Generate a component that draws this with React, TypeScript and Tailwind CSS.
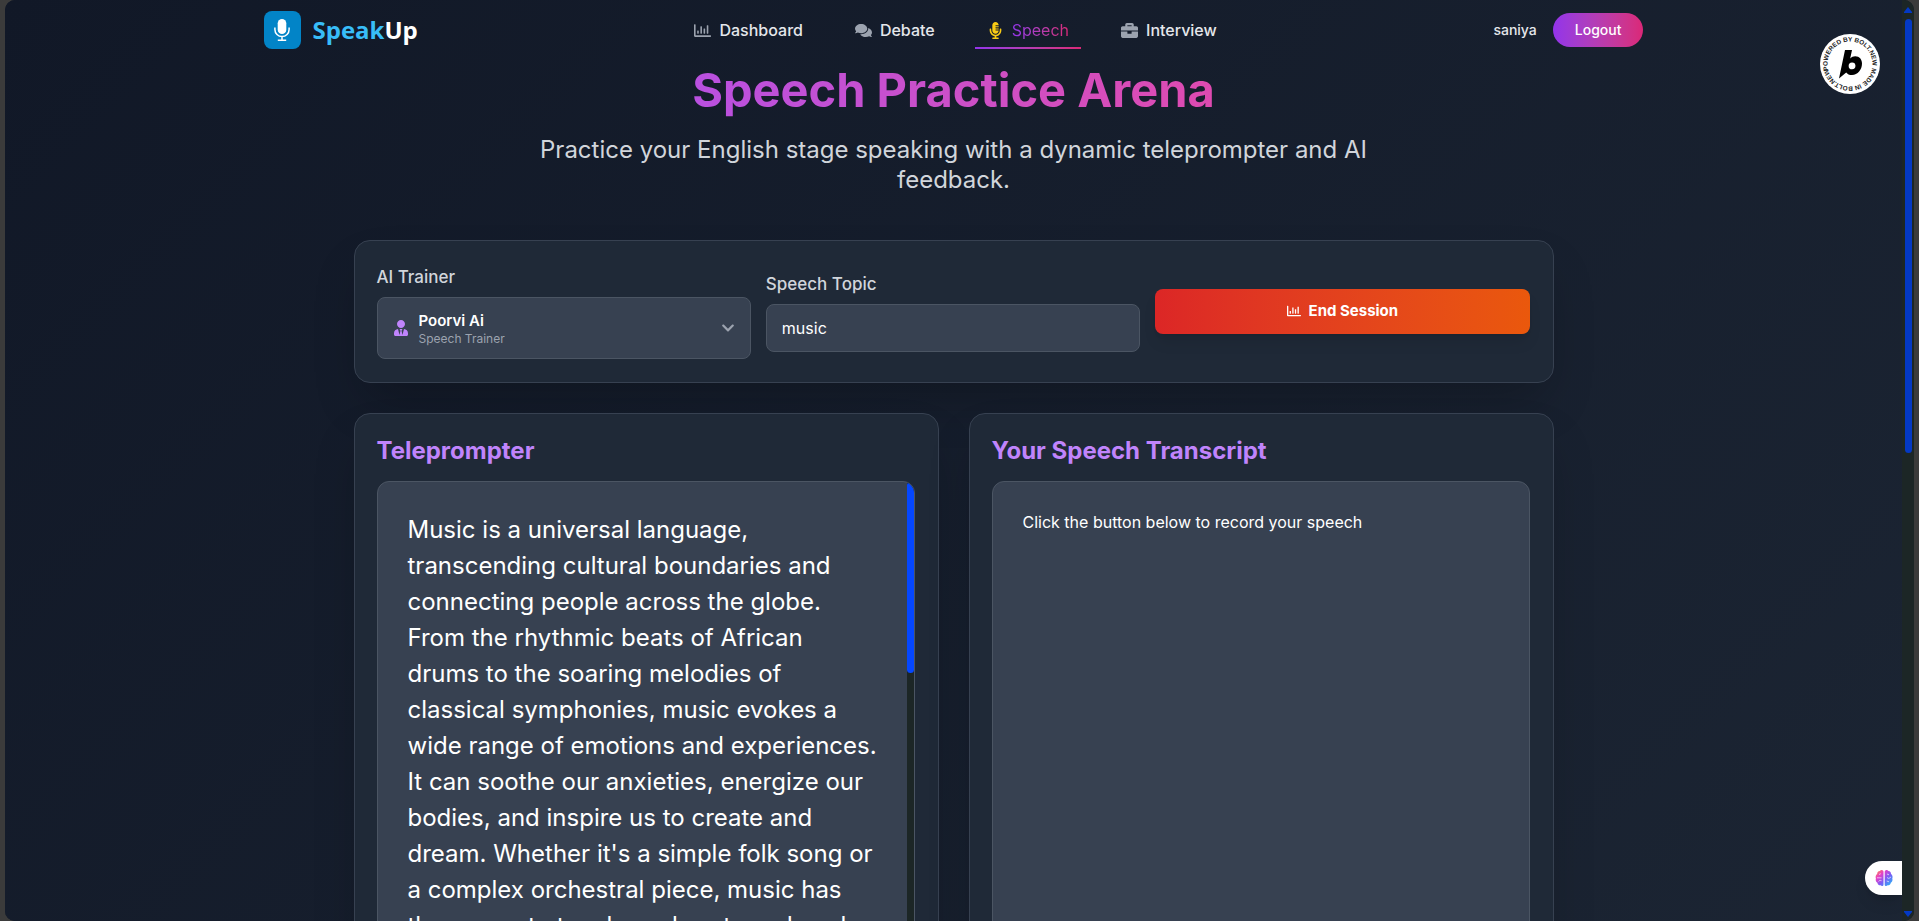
import { FaRegChartBar, FaComments, FaMicrophoneAlt, FaBriefcase, FaUserTie, FaChevronDown } from "react-icons/fa";

const navItems = [
  { name: "Dashboard", icon: FaRegChartBar },
  { name: "Debate", icon: FaComments },
  { name: "Speech", icon: FaMicrophoneAlt, active: true },
  { name: "Interview", icon: FaBriefcase },
];

// one entry per teleprompter line
const speechLines = [
  "Music is a universal language,",
  "transcending cultural boundaries and",
  "connecting people across the globe.",
  "From the rhythmic beats of African",
  "drums to the soaring melodies of",
  "classical symphonies, music evokes a",
  "wide range of emotions and experiences.",
  "It can soothe our anxieties, energize our",
  "bodies, and inspire us to create and",
  "dream. Whether it's a simple folk song or",
  "a complex orchestral piece, music has",
  "the power to touch our hearts and souls.",
];

function Logo() {
  return (
    <a href="#" className="flex items-center gap-3">
      <span className="flex h-[38px] w-[37px] items-center justify-center rounded-lg bg-[#0284c7]">
        <svg viewBox="0 0 16 22" className="h-[22px] w-4" fill="none" stroke="#fff" strokeWidth="1.5">
          <rect x="3.7" y="0" width="8.6" height="15" rx="4.3" fill="#fff" stroke="none" />
          <path d="M0.9 8.5v2a7.1 7.1 0 0 0 14.2 0v-2M8 17.5v3.5M3.8 21.2h8.4" />
        </svg>
      </span>
      <span className="font-['Open_Sans',sans-serif] text-2xl font-bold text-white">
        <span className="text-[#38bdf8]">Speak</span>Up
      </span>
    </a>
  );
}

function Header() {
  return (
    <header className="mx-auto flex h-[60px] w-full max-w-[1380px] items-center justify-between">
      <Logo />
      <nav className="flex items-center gap-7 self-stretch">
        {navItems.map(({ name, icon: Icon, active }) => (
          <a
            key={name}
            href="#"
            className="relative flex h-full items-center gap-2 px-3 text-base font-medium text-[#e5e7eb]"
          >
            <Icon className={active ? "h-[17px] w-[17px] text-[#facc15]" : "h-[17px] w-[17px] text-[#9ca3af]"} />
            {active ? (
              <span className="bg-linear-to-r from-[#9333ea] to-[#db2777] bg-clip-text font-normal text-transparent">
                {name}
              </span>
            ) : (
              name
            )}
            {active && (
              <span className="absolute inset-x-0 bottom-[11px] h-[2px] bg-linear-to-r from-[#9333ea] to-[#db2777]" />
            )}
          </a>
        ))}
      </nav>
      <div className="flex items-center gap-4">
        <span className="text-sm font-medium text-[#e5e7eb]">saniya</span>
        <button className="h-[34px] rounded-full bg-linear-to-r from-[#9333ea] to-[#db2777] px-[22px] text-sm font-medium text-white">
          Logout
        </button>
      </div>
    </header>
  );
}

function BoltBadge() {
  return (
    <svg viewBox="0 0 60 60" className="absolute top-[34px] right-[22px] h-[60px] w-[60px]">
      <defs>
        <path id="ring" d="M7.5 30a22.5 22.5 0 1 1 45 0a22.5 22.5 0 1 1 -45 0" />
      </defs>
      <circle cx="30" cy="30" r="30" fill="#fff" />
      <g transform="rotate(-16 30 30)">
        <text fontSize="6.4" fontWeight="700" fill="#222" fontFamily="Liberation Sans, sans-serif">
          <textPath href="#ring">POWERED BY BOLT.NEW MADE IN BOLT.NEW</textPath>
        </text>
      </g>
      <path
        fillRule="evenodd"
        d="M25 16h7l-1.8 8.5c1.4-1.5 3-2.2 5-2.2 4.3 0 6.8 3.1 6.8 7.3 0 6.2-4.3 11.4-10 11.4-2.6 0-4.6-.9-5.8-2.6L19 44.5zM32 28.5a3.4 3.4 0 1 0 .1 6.8a3.4 3.4 0 1 0-.1-6.8z"
        fill="#000"
      />
    </svg>
  );
}

function BrainIcon() {
  return (
    <svg viewBox="0 0 18 18" className="h-[18px] w-[18px]">
      <defs>
        <linearGradient id="brain" gradientUnits="userSpaceOnUse" x1="1" y1="1" x2="16" y2="17">
          <stop offset="0" stopColor="#fb923c" />
          <stop offset="0.3" stopColor="#e83fc8" />
          <stop offset="0.6" stopColor="#7c5cf5" />
          <stop offset="1" stopColor="#22b8f5" />
        </linearGradient>
      </defs>
      <path
        fill="url(#brain)"
        d="M8.5 2.5C8 .8 5.8.5 4.8 2 3 2 2 3.5 2.2 5 .8 5.8.2 8 .9 9.5.3 11.3 1 13 2.4 13.7c.3 2 2 2.9 3.2 2.6 1 1.300 2.900.8 2.900-.6zM9.700 2.500C10.200.8 12.400.5 13.400 2c1.800 0 2.800 1.500 2.600 3 1.400.8 2 3 1.300 4.500.6 1.800-.1 3.500-1.500 4.200-.3 2-2 2.900-3.200 2.600-1 1.300-2.900.8-2.900-.6z"
      />
      <path
        d="M2 8.8h4.5M4 5.5l1.8-.8M3.5 12.5c.8-1.2 2-1.3 3-.8M16 8l-2.2 1.500L12 8.5M12 5l2 .8M11.7 12l2.3.8"
        fill="none"
        stroke="#fff"
        strokeOpacity="0.7"
        strokeWidth="0.9"
      />
    </svg>
  );
}

function AiTab() {
  return (
    <button
      aria-label="Assistant"
      className="absolute right-0 bottom-[26px] flex h-[34px] w-[37px] items-center justify-center rounded-l-full bg-white shadow-lg"
    >
      <BrainIcon />
    </button>
  );
}

function PageScrollbar() {
  return (
    <div className="flex w-3 shrink-0 flex-col items-center justify-between bg-[#1c2626] pt-[7px] pb-1">
      <div className="flex w-full flex-1 flex-col items-center gap-[6px]">
        <svg viewBox="0 0 8 6" className="h-[6px] w-2 fill-[#0439c4]">
          <path d="M4 0l4 5v1H0V5z" />
        </svg>
        <div className="h-[48%] w-[7px] rounded-full bg-[#0439c4]" />
      </div>
      <svg viewBox="0 0 8 6" className="h-[6px] w-2 fill-[#0439c4]">
        <path d="M4 6L0 1V0h8v1z" />
      </svg>
    </div>
  );
}

export default function App() {
  return (
    <div className="flex h-screen bg-[#3b3b3b] px-[5px] font-['Inter',sans-serif]">
      <div className="flex min-w-0 flex-1 overflow-hidden rounded-[10px] bg-[#111827]">
        <div className="relative min-w-0 flex-1 overflow-hidden">
          <div className="min-h-[200vh] bg-linear-to-br from-[#111827] to-[#1f2937]">
            <Header />

            <main className="mx-auto max-w-[1200px]">
              <h1 className="mx-auto w-fit text-[47px] leading-[60px] font-bold">
                <span className="bg-linear-to-r from-[#b950e0] to-[#de4ab0] bg-clip-text text-transparent">
                  Speech Practice Arena
                </span>
              </h1>
              <p className="mx-auto mt-[15px] max-w-[840px] text-center text-2xl leading-[30px] text-[#d1d5db]">
                Practice your English stage speaking with a dynamic teleprompter and AI feedback.
              </p>

              {/* Session setup */}
              <section className="mt-[45px] grid grid-cols-3 items-center gap-[15px] rounded-2xl border border-[#374151] bg-[#1f2937] pt-[22px] pr-[23px] pb-[23px] pl-[22px] shadow-2xl">
                <div>
                  <span id="trainer" className="block text-[17px] leading-7 font-medium text-[#d1d5db]">
                    AI Trainer
                  </span>
                  <button
                    aria-labelledby="trainer"
                    className="mt-[6px] flex h-[62px] w-full items-center gap-[10px] rounded-lg border border-[#4b5563] bg-[#374151] px-[15px] text-left"
                  >
                    <FaUserTie className="h-4 w-4 text-[#c084fc]" />
                    <span className="flex-1">
                      <span className="block pt-[2px] text-[15px] leading-5 font-semibold text-white">Poorvi Ai</span>
                      <span className="block text-xs leading-4 text-[#9ca3af]">Speech Trainer</span>
                    </span>
                    <FaChevronDown className="h-[14px] w-[14px] text-[#9ca3af]" />
                  </button>
                </div>
                <div>
                  <label htmlFor="topic" className="block text-[17px] leading-7 font-medium text-[#d1d5db]">
                    Speech Topic
                  </label>
                  <input
                    id="topic"
                    defaultValue="music"
                    className="mt-[6px] h-12 w-full rounded-lg border border-[#4b5563] bg-[#374151] px-[15px] text-base text-white"
                  />
                </div>
                <button className="flex h-[45px] items-center justify-center gap-2 rounded-lg bg-linear-to-r from-[#dc2626] to-[#ea580c] text-[15px] font-bold text-white shadow-lg">
                  <FaRegChartBar className="h-[14px] w-[14px]" />
                  End Session
                </button>
              </section>

              <div className="mt-[30px] grid grid-cols-2 gap-[30px]">
                <section className="rounded-2xl border border-[#374151] bg-[#1f2937] py-[22px] pr-[23px] pl-[22px] shadow-2xl">
                  <h2 className="text-2xl leading-[30px] font-bold text-[#c084fc]">Teleprompter</h2>
                  <div className="mt-[15px] flex min-h-[500px] overflow-hidden rounded-xl border border-[#4b5563] bg-[#374151]">
                    <div className="flex-1 py-[30px] pr-2 pl-[30px] text-2xl leading-9 text-white">
                      {speechLines.map((line) => (
                        <p key={line}>{line}</p>
                      ))}
                    </div>
                    <div className="w-[7px] bg-[#1c2626]">
                      <div className="h-[191px] rounded-full bg-[#0547ff]" />
                    </div>
                  </div>
                </section>
                <section className="rounded-2xl border border-[#374151] bg-[#1f2937] py-[22px] pr-[23px] pl-[22px] shadow-2xl">
                  <h2 className="text-2xl leading-[30px] font-bold text-[#c084fc]">Your Speech Transcript</h2>
                  <div className="mt-[15px] min-h-[500px] rounded-xl border border-[#4b5563] bg-[#374151] px-[30px] py-7">
                    <p className="text-base leading-6 text-white">Click the button below to record your speech</p>
                  </div>
                </section>
              </div>
            </main>
          </div>
          <BoltBadge />
          <AiTab />
        </div>
        <PageScrollbar />
      </div>
    </div>
  );
}
